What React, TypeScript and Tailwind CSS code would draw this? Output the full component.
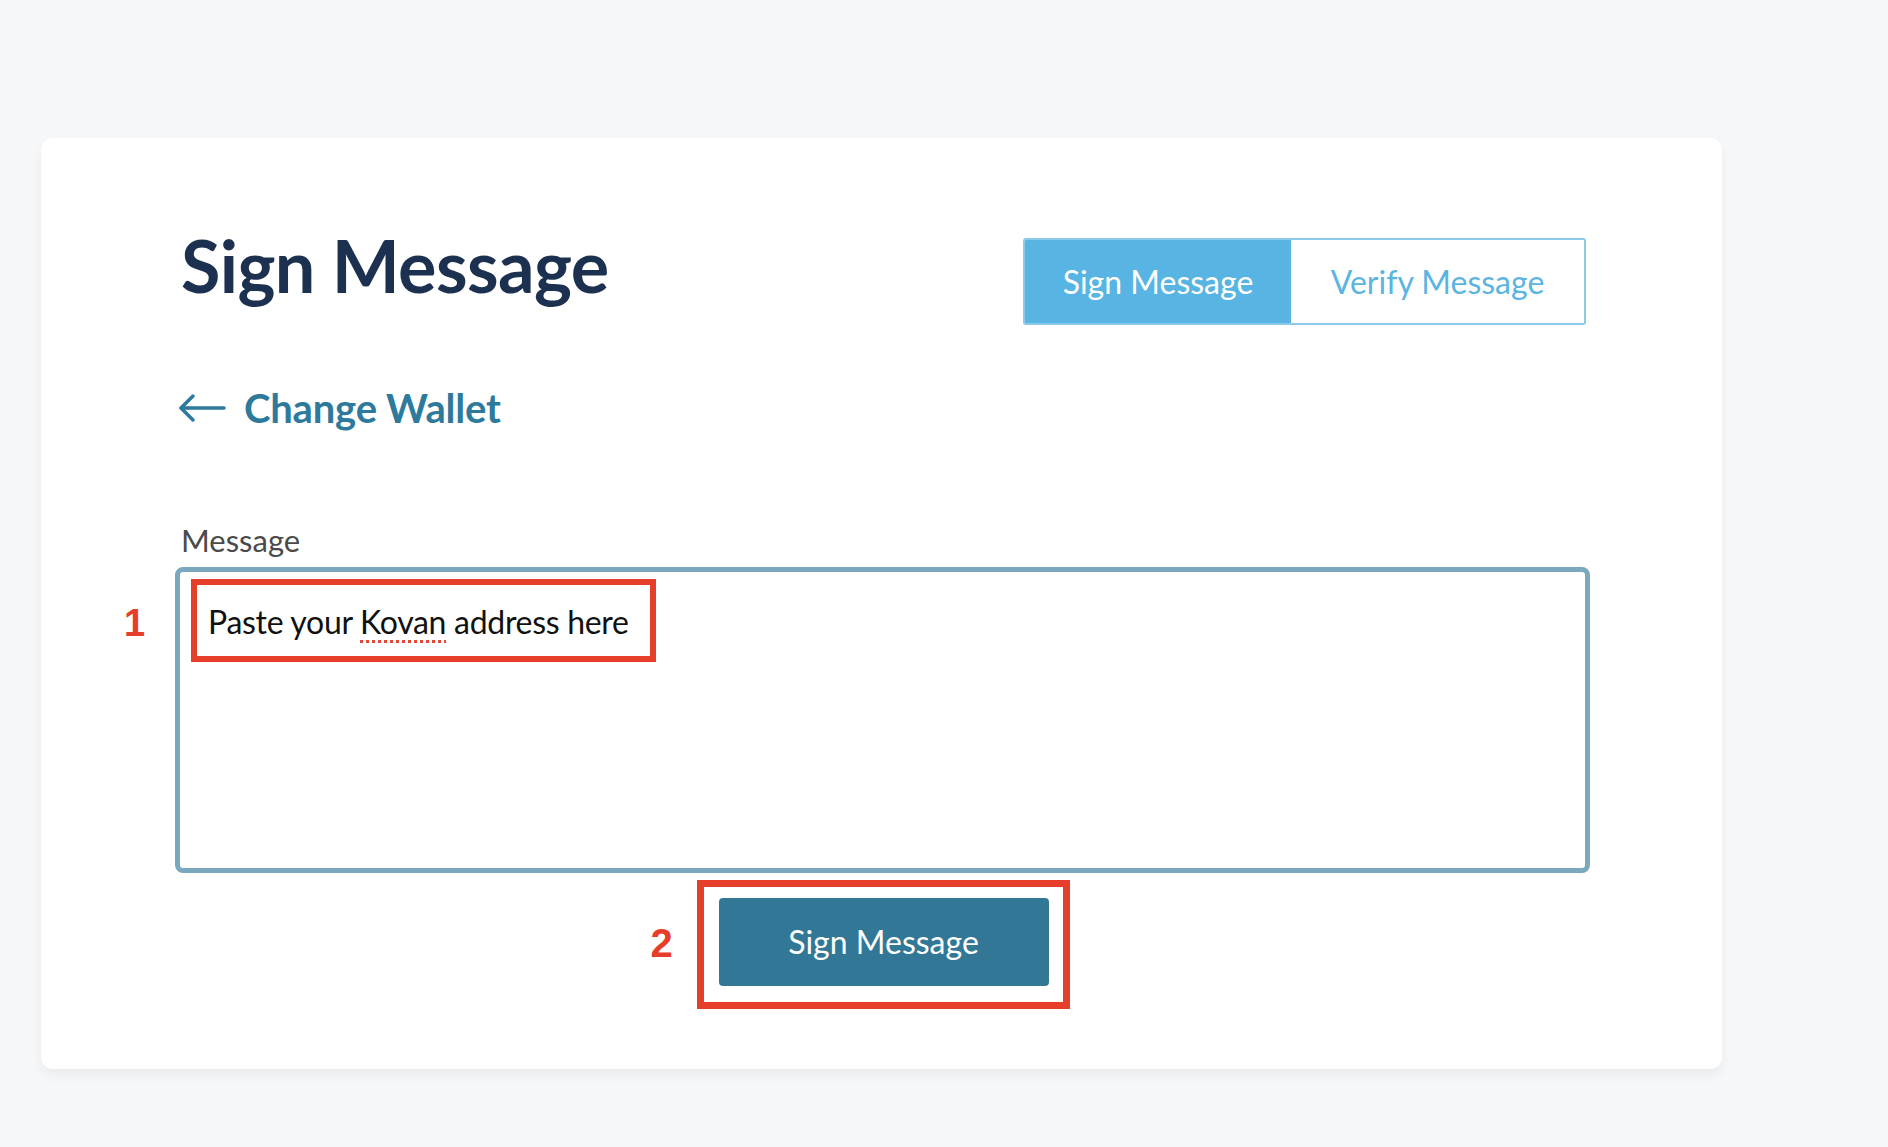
import { useState } from "react";

const lato = "font-['Lato','Noto_Sans',sans-serif]";

function ArrowLeft() {
  return (
    <svg width="48" height="30" viewBox="0 0 48 30" fill="none" stroke="#2e7a9c" strokeWidth="3.5" strokeLinecap="round" strokeLinejoin="round">
      <path d="M46 15H3" />
      <path d="M15 3L3 15l12 12" />
    </svg>
  );
}

export default function App() {
  const [tab, setTab] = useState<"sign" | "verify">("sign");

  return (
    <div className={`min-h-screen bg-[#f6f7f9] pt-[138px] pl-[41px] ${lato}`}>
      <div className="w-[1681px] h-[931px] bg-white rounded-[12px] shadow-[0_6px_12px_rgba(0,0,0,0.05)] pl-[140px] pr-[136px] pt-[100px]">
        <div className="flex justify-between items-start">
          <h1 className="text-[72px] leading-none font-bold text-[#1c3150] -mt-[9px] tracking-[-0.6px]">Sign Message</h1>
          <div className="flex h-[87px] border-2 border-[#8ccaec] rounded-[3px] overflow-hidden">
            <button
              onClick={() => setTab("sign")}
              className={`w-[266px] text-[32px] ${tab === "sign" ? "bg-[#57b4e3] text-white" : "bg-white text-[#5bb4e2]"}`}
            >
              Sign Message
            </button>
            <button
              onClick={() => setTab("verify")}
              className={`w-[293px] text-[32px] ${tab === "verify" ? "bg-[#57b4e3] text-white" : "bg-white text-[#5bb4e2]"}`}
            >
              Verify Message
            </button>
          </div>
        </div>

        <a href="#" className="mt-[63px] flex items-center gap-[18px] -ml-[3px] w-fit">
          <ArrowLeft />
          <span className="text-[40px] leading-none font-bold text-[#2e7a9c] tracking-[-0.2px]">Change Wallet</span>
        </a>

        <div className="mt-[97px] text-[31px] leading-none text-[#4a4a4a]">Message</div>

        <div className="relative mt-[11px] -ml-[6px] -mr-[4px] h-[306px] border-[5px] border-[#79a8bf] rounded-[8px] pl-[28px] pt-[31px]">
          <p className="text-[32px] leading-[38px] text-[#111] tracking-[-0.3px]">
            Paste your{" "}
            <span className="underline decoration-dotted decoration-[#e0493a] decoration-[3px] underline-offset-[6px]">Kovan</span>{" "}
            address here
          </p>
          <div className="absolute left-[11px] top-[7px] w-[465px] h-[83px] border-[6px] border-[#e63e2a]" />
          <span className="absolute left-[-56px] top-[32px] font-['Liberation_Sans',Arial,sans-serif] font-bold text-[38px] leading-none text-[#e63e2a]">1</span>
        </div>

        <div className="flex justify-center mt-[25px]">
          <div className="relative">
            <button className="w-[330px] h-[88px] bg-[#327796] rounded-[4px] text-white text-[32px]">Sign Message</button>
            <div className="absolute -left-[22px] -top-[18px] -right-[21px] -bottom-[23px] border-[7px] border-[#e63e2a]" />
            <span className="absolute left-[-68px] top-[25px] font-['Liberation_Sans',Arial,sans-serif] font-bold text-[40px] leading-none text-[#e63e2a]">2</span>
          </div>
        </div>
      </div>
    </div>
  );
}
